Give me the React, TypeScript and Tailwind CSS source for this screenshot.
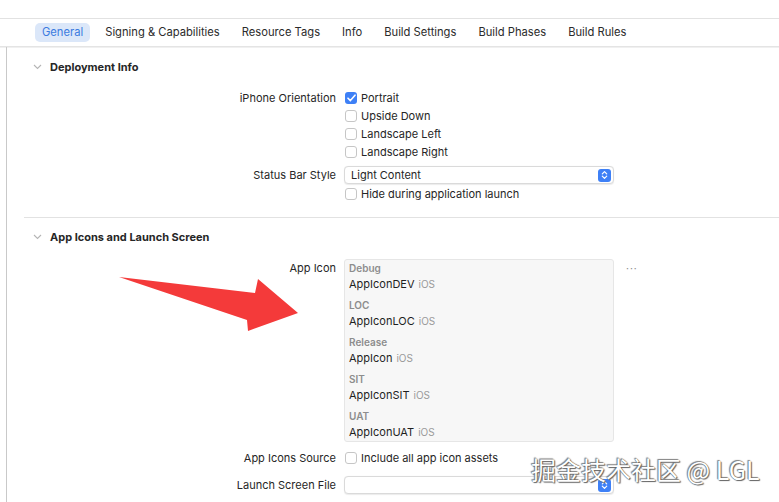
import React from 'react';

const tabs = ['General', 'Signing & Capabilities', 'Resource Tags', 'Info', 'Build Settings', 'Build Phases', 'Build Rules'];

const icons = [
  { group: 'Debug', name: 'AppIconDEV' },
  { group: 'LOC', name: 'AppIconLOC' },
  { group: 'Release', name: 'AppIcon' },
  { group: 'SIT', name: 'AppIconSIT' },
  { group: 'UAT', name: 'AppIconUAT' },
];

function Chevron() {
  return (
    <svg width="9" height="6" viewBox="0 0 9 6" className="shrink-0">
      <path d="M1 1 L4.5 4.5 L8 1" fill="none" stroke="#b5b5b5" strokeWidth="1.1" />
    </svg>
  );
}

function Checkbox({ checked = false }: { checked?: boolean }) {
  if (checked) {
    return (
      <span className="w-[12px] h-[12px] rounded-[3px] bg-[#3e80f6] flex items-center justify-center shrink-0">
        <svg width="9" height="8" viewBox="0 0 9 8">
          <path d="M1 4.2 L3.4 6.6 L8 1.2" fill="none" stroke="white" strokeWidth="1.6" strokeLinecap="round" strokeLinejoin="round" />
        </svg>
      </span>
    );
  }
  return <span className="w-[12px] h-[12px] rounded-[3px] bg-white border border-[#c6c6c6] shrink-0" />;
}

function Stepper() {
  return (
    <span className="w-[13px] h-[13px] rounded-[3px] bg-[#3e80f6] flex items-center justify-center shrink-0">
      <svg width="7" height="10" viewBox="0 0 7 10">
        <path d="M1.3 3.8 L3.5 1.6 L5.7 3.8 M1.3 6.2 L3.5 8.4 L5.7 6.2" fill="none" stroke="white" strokeWidth="1.2" strokeLinecap="round" strokeLinejoin="round" />
      </svg>
    </span>
  );
}

function Popup({ value }: { value?: string }) {
  return (
    <div className="w-[270px] h-[18px] rounded-[4px] bg-white border border-[#dadada] shadow-[0_0.5px_1px_rgba(0,0,0,0.08)] flex items-center pl-[6px] pr-[2px]">
      <span className="flex-1 text-[11px] text-[#262626]">{value}</span>
      <Stepper />
    </div>
  );
}

function Row({ label, children, className = '' }: { label?: string; children: React.ReactNode; className?: string }) {
  return (
    <div className={`flex items-center ${className}`}>
      <div className="w-[320px] pr-[8px] text-right text-[11px] text-[#262626] shrink-0">{label}</div>
      <div className="flex items-center">{children}</div>
    </div>
  );
}

function CheckRow({ label, text, checked }: { label?: string; text: string; checked?: boolean }) {
  return (
    <Row label={label} className="h-[18px]">
      <div className="flex items-center gap-[4px] pl-[1px]">
        <Checkbox checked={checked} />
        <span className="text-[11px] text-[#262626]">{text}</span>
      </div>
    </Row>
  );
}

function SectionHeader({ title }: { title: string }) {
  return (
    <div className="h-[14px] flex items-center gap-[8px] pl-[9px]">
      <Chevron />
      <span className="text-[11px] font-bold text-[#262626]">{title}</span>
    </div>
  );
}

export default function App() {
  return (
    <div className="relative w-[779px] h-[502px] overflow-hidden bg-white font-['Inter','Liberation_Sans',sans-serif]">
      <div className="h-[19px] border-b border-[#e2e2e2]" />
      <div className="h-[28px] flex items-center gap-[8px] pl-[35px] border-b border-[#e4e4e4] shadow-[0_1px_0_#f0f0f0]">
        {tabs.map((t, i) => (
          <div
            key={t}
            className={`h-[19px] px-[7px] rounded-[5px] flex items-center text-[11.2px] ${i === 0 ? 'bg-[#dbe7f9] text-[#3b7be0]' : 'text-[#2b2b2b]'}`}
          >
            {t}
          </div>
        ))}
      </div>

      <div className="flex h-[455px]">
        <div className="w-[7px] border-r border-[#c9c9c9] shrink-0" />
        <div className="flex-1 pl-[17px]">
          <div className="pt-[13px] pb-[14px] border-b border-[#e2e2e2]">
            <SectionHeader title="Deployment Info" />
            <div className="mt-[15px] flex flex-col">
              <CheckRow label="iPhone Orientation" text="Portrait" checked />
              <CheckRow text="Upside Down" />
              <CheckRow text="Landscape Left" />
              <CheckRow text="Landscape Right" />
              <Row label="Status Bar Style" className="h-[18px] mt-[5px] mb-[1px]">
                <Popup value="Light Content" />
              </Row>
              <CheckRow text="Hide during application launch" />
            </div>
          </div>

          <div className="pt-[12px]">
            <SectionHeader title="App Icons and Launch Screen" />
            <div className="mt-[15px] flex items-start">
              <div className="w-[320px] pr-[8px] text-right text-[11px] text-[#262626] shrink-0 h-[15px] mt-[2px] flex items-center justify-end">
                App Icon
              </div>
              <div className="w-[270px] border border-[#e6e6e6] rounded-[3px] bg-[#f7f7f7] pt-[1px] pb-[1px] pl-[4px] flex flex-col gap-[6px]">
                {icons.map((ic) => (
                  <div key={ic.group} className="flex flex-col">
                    <div className="h-[15px] flex items-center text-[10px] font-semibold text-[#8d8d8d]">{ic.group}</div>
                    <div className="h-[16px] flex items-center gap-[4px]">
                      <span className="text-[11px] text-[#1f1f1f]">{ic.name}</span>
                      <span className="text-[10px] text-[#9a9a9a]">iOS</span>
                    </div>
                  </div>
                ))}
              </div>
              <div className="ml-[12px] mt-[2px] h-[15px] flex items-center text-[10px] text-[#8a8a8a] tracking-[1px]">···</div>
            </div>
            <div className="mt-[7px]">
              <CheckRow label="App Icons Source" text="Include all app icon assets" />
            </div>
            <Row label="Launch Screen File" className="h-[18px] mt-[9px]">
              <Popup />
            </Row>
          </div>
        </div>
      </div>

      <svg className="absolute left-0 top-0 pointer-events-none" width="779" height="502" viewBox="0 0 779 502">
        <polygon points="119,277 255,293 258,279 298,313 248,331 247,320" fill="#f43a3a" />
      </svg>

      <div className="absolute left-[531px] top-[451px] text-[25px] text-white font-['Noto_Sans_CJK_SC',sans-serif] whitespace-nowrap [text-shadow:0_0_1px_#444,1px_1px_1px_#666,-1px_-1px_1px_#888]">
        掘金技术社区 @ LGL
      </div>
    </div>
  );
}
